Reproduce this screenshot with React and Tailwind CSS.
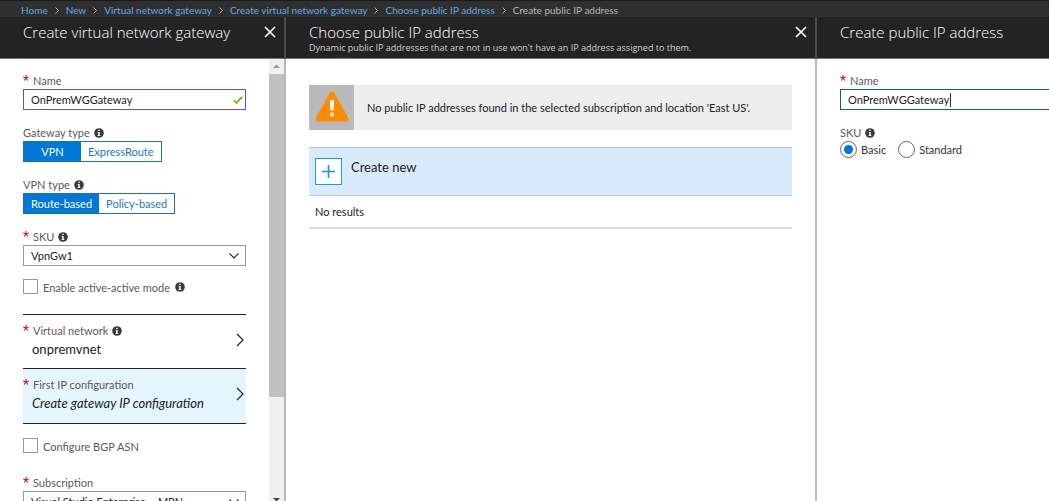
import React from "react";

const crumbs = [
  "Home",
  "New",
  "Virtual network gateway",
  "Create virtual network gateway",
  "Choose public IP address",
];

function Chevron({ className }) {
  return (
    <svg viewBox="0 0 8 14" className={className} fill="none" stroke="currentColor" strokeWidth="1.2" aria-hidden="true">
      <path d="M1 1 L7 7 L1 13" />
    </svg>
  );
}

function Info() {
  return (
    <svg viewBox="0 0 10 10" className="size-[10px] shrink-0" aria-hidden="true">
      <circle cx="5" cy="5" r="4.800" fill="#3a3a3a" />
      <path d="M4.200 1.700h1.500v1.400H4.200z M3.600 3.900h2.100v3.300h.7v.9H3.500v-.9h.7V4.800h-.6z" fill="#fff" />
    </svg>
  );
}

function Required() {
  return (
    <svg viewBox="0 0 6 6" className="mb-[6px] size-[6px] shrink-0" stroke="#d0142c" strokeWidth="1.1" aria-hidden="true">
      <path d="M3 0V3 M.2 2.1L3 3L5.8 2.1 M1.2 5.5L3 3L4.8 5.5" fill="none" />
    </svg>
  );
}

function Label({ htmlFor, required, info, children }) {
  return (
    <div className="flex h-[18px] items-center gap-1 pt-[2px] text-[#5a5a5a]">
      {required && <Required />}
      <label htmlFor={htmlFor}>{children}</label>
      {info && <Info />}
    </div>
  );
}

function Toggle({ label, options }) {
  return (
    <div role="group" aria-label={label}>
      <div className="flex h-[18px] items-center gap-1 pt-[2px] text-[#5a5a5a]">
        <span>{label}</span>
        <Info />
      </div>
      <div className="flex h-[21px] w-fit border border-[#1a6fb5]">
        {options.map((o, i) => (
          <button
            key={o}
            type="button"
            aria-pressed={i === 0}
            className={i === 0 ? "min-w-[57px] bg-[#0078d7] px-[7px] text-white" : "bg-white px-[7px] text-[#1a78c2]"}
          >
            {o}
          </button>
        ))}
      </div>
    </div>
  );
}

function Select({ id, value }) {
  return (
    <div className="relative">
      <select id={id} className="block h-[21px] w-full appearance-none border border-[#999] bg-white px-[7px] text-[#222]">
        <option>{value}</option>
      </select>
      <svg viewBox="0 0 10 6" className="pointer-events-none absolute top-2 right-[7px] h-[6px] w-[10px]" fill="none" stroke="#222" strokeWidth="1.1" aria-hidden="true">
        <path d="M.5 .5L5 5L9.5 .5" />
      </svg>
    </div>
  );
}

function Check({ id, label, info }) {
  return (
    <div className="flex h-[15px] items-center gap-[5px] text-[#5a5a5a]">
      <input id={id} type="checkbox" className="size-[15px] shrink-0 appearance-none border border-[#999] bg-white" />
      <label htmlFor={id} className="pt-[2px]">{label}</label>
      {info && <Info />}
    </div>
  );
}

function CloseButton() {
  return (
    <button type="button" aria-label="Close" className="mt-[9px] size-3 shrink-0">
      <svg viewBox="0 0 12 12" className="size-3" stroke="#fff" strokeWidth="1.700" aria-hidden="true">
        <path d="M1 1L11 11M11 1L1 11" />
      </svg>
    </button>
  );
}

function BladeHeader({ title, subtitle, closable }) {
  return (
    <header className={closable ? "border-r-2 border-[#4c4c4c] bg-[#232323]" : "bg-[#232323]"}>
      <div className="flex h-[42px] items-start justify-between border-b border-[#777] pr-2 pl-[23px] font-['Open_Sans',sans-serif] text-white">
        <div className="min-w-0 whitespace-nowrap">
          <h2 className="mt-1 text-[15px] leading-[22px] font-light">{title}</h2>
          {subtitle && <p className="text-[9px] leading-[10px] text-[#d0d0d0]">{subtitle}</p>}
        </div>
        {closable && <CloseButton />}
      </div>
    </header>
  );
}

function LinkRow({ label, value, info, active }) {
  return (
    <button
      type="button"
      className={
        active
          ? "flex h-14 w-full items-center justify-between border-y border-[#222] bg-[#e3f6fe] pr-[2px] pb-1 text-left"
          : "flex h-[54px] w-full items-center justify-between border-t border-[#222] pr-[2px] pb-1 text-left"
      }
    >
      <span className="flex flex-col">
        <span className="flex h-[18px] items-center gap-1 text-[#5a5a5a]">
          <Required />
          {label}
          {info && <Info />}
        </span>
        <span className={active ? "pl-[9px] text-[13px] leading-[18px] text-[#222] italic" : "pl-[9px] text-[13px] leading-[18px] text-[#222]"}>{value}</span>
      </span>
      <Chevron className="h-[14px] w-2 text-[#222]" />
    </button>
  );
}

function ScrollBar() {
  return (
    <div className="flex w-[15px] shrink-0 flex-col bg-[#f0f0f0]" aria-hidden="true">
      <svg viewBox="0 0 15 15" className="h-[15px] w-[15px] shrink-0"><path d="M4 9H11L7.500 5.500Z" fill="#999" /></svg>
      <div className="flex-[324] bg-[#c1c1c1]" />
      <div className="flex-[100]" />
      <svg viewBox="0 0 15 4" className="h-1 w-[15px] shrink-0"><path d="M4 1H11L8 4H7Z" fill="#444" /></svg>
    </div>
  );
}

function GatewayBlade() {
  return (
    <section className="flex min-h-0 flex-col">
      <BladeHeader title="Create virtual network gateway" closable />
      <div className="flex min-h-0 flex-1 border-r-2 border-[#b8b8b8]">
        <form className="min-w-0 flex-1 overflow-hidden pt-3 pr-[23px] pl-[23px]">
          <div className="flex flex-col gap-[13px]">
            <div>
              <Label htmlFor="gw-name" required>Name</Label>
              <div className="relative">
                <input id="gw-name" defaultValue="OnPremWGGateway" className="block h-[21px] w-full border border-[#804998] px-[7px] text-[#222]" />
                <svg viewBox="0 0 10 8" className="pointer-events-none absolute top-[7px] right-[3px] h-2 w-[10px]" fill="none" stroke="#6bb700" strokeWidth="1.8" aria-hidden="true">
                  <path d="M.8 4L3.500 6.800L9.200 .8" />
                </svg>
              </div>
            </div>
            <Toggle label="Gateway type" options={["VPN", "ExpressRoute"]} />
            <Toggle label="VPN type" options={["Route-based", "Policy-based"]} />
            <div>
              <Label htmlFor="gw-sku" required info>SKU</Label>
              <Select id="gw-sku" value="VpnGw1" />
            </div>
            <Check id="active" label="Enable active-active mode" info />
          </div>
          <div className="mt-5 mb-[14px]">
            <LinkRow label="Virtual network" value="onpremvnet" info />
            <LinkRow label="First IP configuration" value="Create gateway IP configuration" active />
          </div>
          <Check id="bgp" label="Configure BGP ASN" />
          <div className="mt-5">
            <Label htmlFor="sub" required>Subscription</Label>
            <Select id="sub" value="Visual Studio Enterprise – MPN" />
          </div>
        </form>
        <ScrollBar />
      </div>
    </section>
  );
}

function ChooseBlade() {
  return (
    <section className="flex min-w-0 flex-col">
      <BladeHeader
        title="Choose public IP address"
        subtitle="Dynamic public IP addresses that are not in use won't have an IP address assigned to them."
        closable
      />
      <div className="flex flex-1 flex-col border-r-2 border-[#b8b8b8] pt-[26px] pr-[23px] pl-[23px] text-[#222]">
        <div className="flex h-[45px] items-center bg-[#ededed]">
          <div className="flex h-full w-[45px] shrink-0 items-center justify-center bg-[#b9b9b9]">
            <svg viewBox="0 0 34 31" className="mb-[2px] h-[31px] w-[34px]" aria-hidden="true">
              <path d="M17 3L31 28H3Z" fill="#ff8c00" stroke="#ff8c00" strokeWidth="5" strokeLinejoin="round" />
              <path d="M15 9H19L18.600 19.500H15.400Z" fill="#fff" />
              <circle cx="17" cy="23.500" r="2" fill="#fff" />
            </svg>
          </div>
          <p className="pl-[13px]">No public IP addresses found in the selected subscription and location 'East US'.</p>
        </div>
        <button type="button" className="mt-[17px] flex h-[49px] items-start gap-[9px] border-y border-[#b9c4d0] bg-[#d8ebfd] pt-[10px] pl-[6px] text-left text-[13px]">
          <svg viewBox="0 0 27 27" className="size-[27px] shrink-0" aria-hidden="true">
            <rect x=".5" y=".5" width="26" height="26" fill="#fff" stroke="#1ba1cf" />
            <path d="M13.500 7V20M7 13.500H20" stroke="#1a93c8" strokeWidth="1.6" />
          </svg>
          <span className="leading-[18px]">Create new</span>
        </button>
        <p className="border-b-2 border-[#dcdcdc] pt-2 pb-[7px] pl-[6px] leading-4">No results</p>
      </div>
    </section>
  );
}

function Radio({ label, checked }) {
  return (
    <label className="flex items-center gap-1 text-[#333]">
      <input
        type="radio"
        name="ip-sku"
        defaultChecked={checked}
        className="size-[17px] shrink-0 appearance-none rounded-full border border-[#666] bg-white bg-clip-content p-[3px] checked:bg-[#0078d7]"
      />
      {label}
    </label>
  );
}

function CreateIpBlade() {
  return (
    <section className="flex min-w-0 flex-col">
      <BladeHeader title="Create public IP address" />
      <form className="flex flex-col gap-[13px] pt-3 pl-[23px]">
        <div>
          <Label htmlFor="ip-name" required>Name</Label>
          <div className="relative">
            <input id="ip-name" defaultValue="OnPremWGGateway" className="block h-[21px] w-full border border-r-0 border-[#0f5a93] px-[7px] text-[#222] outline-none" />
            <span className="absolute top-1 left-[110px] h-[14px] w-px bg-[#333]" />
          </div>
        </div>
        <div role="radiogroup" aria-label="SKU">
          <div className="flex h-[18px] items-center gap-1 pt-[2px] text-[#5a5a5a]">
            <span>SKU</span>
            <Info />
          </div>
          <div className="flex gap-3">
            <Radio label="Basic" checked />
            <Radio label="Standard" />
          </div>
        </div>
      </form>
    </section>
  );
}

export default function App() {
  return (
    <div className="flex h-screen flex-col overflow-hidden bg-white font-[Lato,'Open_Sans',sans-serif] text-[11px] leading-4">
      <nav className="flex h-[17px] shrink-0 items-center gap-[7px] border-t border-[#1a1a1a] bg-[#2f2f2f] pt-[2px] pl-[21px] text-[10px] whitespace-nowrap" aria-label="Breadcrumb">
        {crumbs.map((c) => (
          <React.Fragment key={c}>
            <a href="#" className="text-[#5ea9e4]">{c}</a>
            <Chevron className="h-[7px] w-1 text-white" />
          </React.Fragment>
        ))}
        <span className="text-[#b5b5b5]">Create public IP address</span>
      </nav>
      <main className="grid min-h-0 flex-1 grid-cols-[286px_minmax(0,1fr)_232px]">
        <GatewayBlade />
        <ChooseBlade />
        <CreateIpBlade />
      </main>
    </div>
  );
}
